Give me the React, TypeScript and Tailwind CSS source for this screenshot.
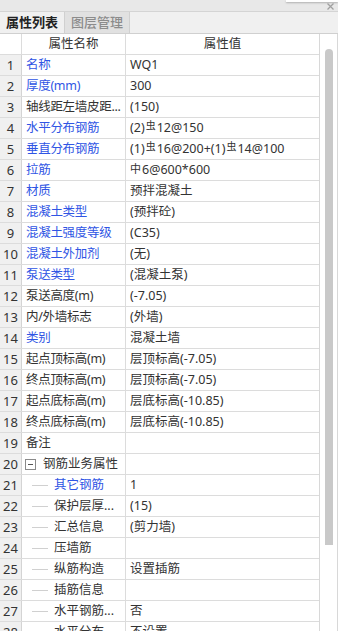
import React from "react";

type Row = { n: number; name: string; value: React.ReactNode; blue?: boolean; kind?: "group" | "child" };

const Hrb = () => (
  <span className="inline-block text-[10px] leading-none relative -top-[3px] mx-[1px]">虫</span>
);
const Hpb = () => (
  <span className="inline-block text-[11px] leading-none relative -top-[2px] mr-[1px]">中</span>
);

const rows: Row[] = [
  { n: 1, name: "名称", value: "WQ1", blue: true },
  { n: 2, name: "厚度(mm)", value: "300", blue: true },
  { n: 3, name: "轴线距左墙皮距...", value: "(150)" },
  { n: 4, name: "水平分布钢筋", value: <>(2)<Hrb />12@150</>, blue: true },
  { n: 5, name: "垂直分布钢筋", value: <>(1)<Hrb />16@200+(1)<Hrb />14@100</>, blue: true },
  { n: 6, name: "拉筋", value: <><Hpb />6@600*600</>, blue: true },
  { n: 7, name: "材质", value: "预拌混凝土", blue: true },
  { n: 8, name: "混凝土类型", value: "(预拌砼)", blue: true },
  { n: 9, name: "混凝土强度等级", value: "(C35)", blue: true },
  { n: 10, name: "混凝土外加剂", value: "(无)", blue: true },
  { n: 11, name: "泵送类型", value: "(混凝土泵)", blue: true },
  { n: 12, name: "泵送高度(m)", value: "(-7.05)" },
  { n: 13, name: "内/外墙标志", value: "(外墙)" },
  { n: 14, name: "类别", value: "混凝土墙", blue: true },
  { n: 15, name: "起点顶标高(m)", value: "层顶标高(-7.05)" },
  { n: 16, name: "终点顶标高(m)", value: "层顶标高(-7.05)" },
  { n: 17, name: "起点底标高(m)", value: "层底标高(-10.85)" },
  { n: 18, name: "终点底标高(m)", value: "层底标高(-10.85)" },
  { n: 19, name: "备注", value: "" },
  { n: 20, name: "钢筋业务属性", value: "", kind: "group" },
  { n: 21, name: "其它钢筋", value: "1", blue: true, kind: "child" },
  { n: 22, name: "保护层厚...", value: "(15)", kind: "child" },
  { n: 23, name: "汇总信息", value: "(剪力墙)", kind: "child" },
  { n: 24, name: "压墙筋", value: "", kind: "child" },
  { n: 25, name: "纵筋构造", value: "设置插筋", kind: "child" },
  { n: 26, name: "插筋信息", value: "", kind: "child" },
  { n: 27, name: "水平钢筋...", value: "否", kind: "child" },
  { n: 28, name: "水平分布...", value: "不设置", kind: "child" },
];

export default function App() {
  return (
    <div
      className="w-[338px] h-[631px] overflow-hidden bg-white text-[12.5px] text-[#333] relative"
      style={{ fontFamily: '"Noto Sans", "Noto Sans CJK SC", sans-serif' }}
    >
      {/* top strip */}
      <div className="h-[12px] bg-[#e8e8e8] border-b border-[#d4d4d4] relative">
        <div className="absolute right-0 top-0 w-[52px] h-[2px] bg-white shadow-[0_1px_2px_rgba(0,0,0,0.25)]" />
        <svg className="absolute right-[4px] top-[3px]" width="7" height="7" viewBox="0 0 7 7">
          <path d="M0.5 0.5L6.5 6.5M6.5 0.5L0.5 6.5" stroke="#a0a0a0" strokeWidth="1.3" />
        </svg>
      </div>
      {/* tabs */}
      <div className="h-[22px] bg-[#f0f0f0] border-b border-[#d0d0d0] flex items-stretch text-[13px]">
        <div className="w-[64px] flex items-center justify-center text-[#222] font-semibold leading-none">属性列表</div>
        <div className="w-[66px] flex items-center justify-center bg-[#e1e1e1] border-l border-r border-[#d0d0d0] text-[#8c8c8c] font-medium leading-none">
          图层管理
        </div>
      </div>
      {/* body */}
      <div className="flex">
        <div className="w-[320px] border-r border-[#d8d8d8]">
          <div className="h-[21px] flex border-b border-[#dcdcdc]">
            <div className="w-[22px] border-r border-[#dcdcdc]" />
            <div className="w-[104px] border-r border-[#dcdcdc] flex items-center justify-center leading-none">属性名称</div>
            <div className="flex-1 flex items-center justify-center leading-none">属性值</div>
          </div>
          {rows.map((r) => (
            <div key={r.n} className="h-[21px] flex border-b border-[#dcdcdc]">
              <div className="w-[22px] bg-[#f0f0f0] border-r border-[#d4d4d4] flex items-center justify-center leading-none text-[#333] text-[13px]">
                {r.n}
              </div>
              <div
                className={`w-[104px] border-r border-[#dcdcdc] flex items-center leading-none whitespace-nowrap overflow-hidden ${
                  r.blue ? "text-[#2f55e4]" : "text-[#333]"
                }`}
              >
                {r.kind === "group" ? (
                  <>
                    <span className="ml-[3px] w-[11px] h-[11px] border border-[#8a8a8a] flex items-center justify-center">
                      <span className="w-[5px] h-px bg-[#555]" />
                    </span>
                    <span className="ml-[7px]">{r.name}</span>
                  </>
                ) : r.kind === "child" ? (
                  <>
                    <span className="ml-[10px] w-[16px] h-px bg-[#d0d0d0]" />
                    <span className="ml-[6px]">{r.name}</span>
                  </>
                ) : (
                  <span className="ml-[4px] tracking-[-0.3px]">{r.name}</span>
                )}
              </div>
              <div className="flex-1 flex items-center leading-none pl-[4px] whitespace-nowrap">{r.value}</div>
            </div>
          ))}
        </div>
        <div className="w-[18px] flex-none relative border-r border-[#d8d8d8] bg-white">
          <div className="absolute left-[5px] top-[15px] w-[8px] h-[496px] bg-[#c9c9c9] rounded-t-[4px]" />
        </div>
      </div>
    </div>
  );
}
